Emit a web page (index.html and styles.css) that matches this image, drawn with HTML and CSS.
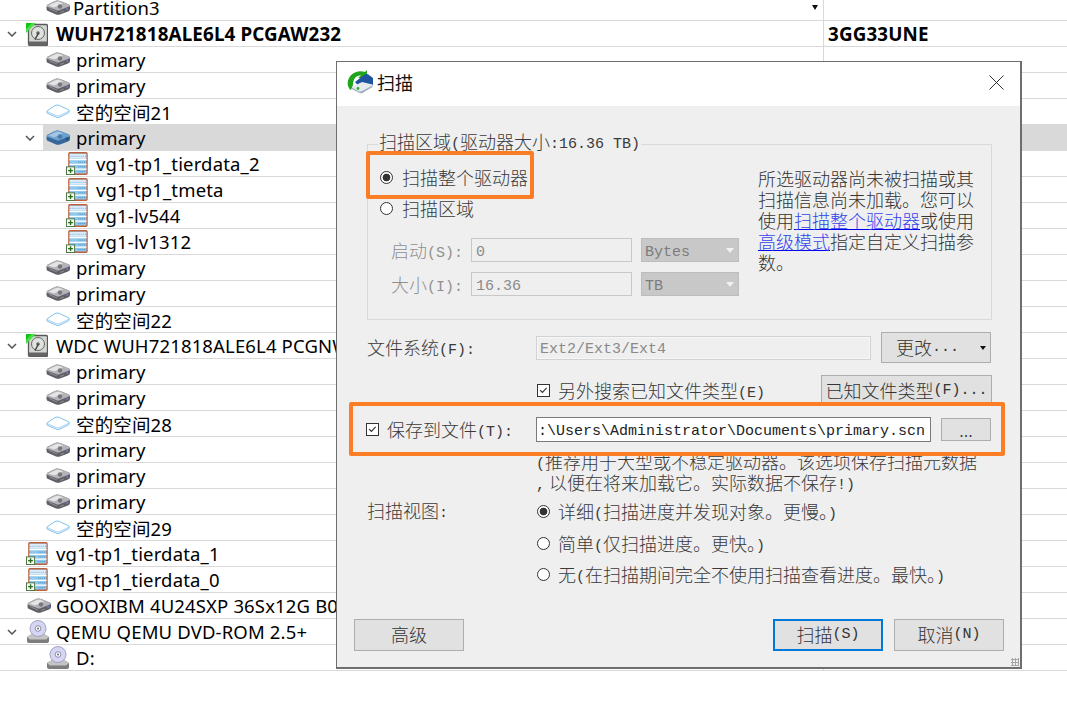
FILE: index.html
```html
<!DOCTYPE html>
<html lang="zh">
<head>
<meta charset="utf-8">
<title>扫描</title>
<link rel="stylesheet" href="styles.css">
</head>
<body>
<svg class="defs" width="0" height="0">
  <defs>
    <symbol id="chev" viewBox="0 0 10 6"><path d="M1 1l4 4 4-4" fill="none" stroke="#555" stroke-width="1.5"/></symbol>
    <symbol id="part" viewBox="0 0 24 15">
      <path d="M1 5L9 1Q11 0 14 1L23 4.500Q24 5.500 24 7.500V9Q24 10.500 22 11.500L14 14.500Q12 15.200 10 14.500L1 10.500Q0 8 1 5Z" fill="#5f5f66"/>
      <path d="M1 5L9 1Q11 0 14 1L23 4.500Q24 5.500 23 6.500L14 10Q12 11 10 10L1 6.800Q.5 6 1 5Z" fill="#b4b4b8"/>
      <path d="M2.500 5.500L10 2Q12 1.500 13.500 2L17 3.500L8 7.500Z" fill="#e4e4e4"/>
      <circle cx="14" cy="6.500" r="2.200" fill="#77777e"/>
      <circle cx="21" cy="8.800" r="1.400" fill="#7474a4"/>
      <path d="M3 8.500L11 12M14 12.500L18 11" stroke="#8d8d92" fill="none"/>
    </symbol>
    <symbol id="part-sel" viewBox="0 0 24 15">
      <path d="M1 5L9 1Q11 0 14 1L23 4.500Q24 5.500 24 7.500V9Q24 10.500 22 11.500L14 14.500Q12 15.200 10 14.500L1 10.500Q0 8 1 5Z" fill="#35679b"/>
      <path d="M1 5L9 1Q11 0 14 1L23 4.500Q24 5.500 23 6.500L14 10Q12 11 10 10L1 6.800Q.5 6 1 5Z" fill="#6f9fcc"/>
      <path d="M2.500 5.500L10 2Q12 1.500 13.500 2L17 3.500L8 7.500Z" fill="#a3c5e6"/>
      <circle cx="14" cy="6.500" r="2.200" fill="#477aab"/>
      <circle cx="21" cy="8.800" r="1.400" fill="#234c7f"/>
    </symbol>
    <symbol id="empty" viewBox="0 0 24 15">
      <path d="M1 7L9 1.500Q11 .5 13.500 1.500L23 6Q23.500 7 23 8.500L14 13Q12 14 10 13L1 9Q.5 8 1 7Z" fill="#fff" stroke="#7fc0ee" stroke-width="1"/>
      <path d="M1 7.500L10 11.500Q12 12.300 14 11.500L23 7" fill="none" stroke="#a9d7f5" stroke-width="1"/>
    </symbol>
    <symbol id="disk-ok" viewBox="0 0 22 23">
      <rect x="2.500" y="1.500" width="19" height="21" rx="1.500" fill="#d3d7d2" stroke="#585858" stroke-width="1.300"/>
      <rect x="2.500" y="18.500" width="19" height="4" fill="#656565"/>
      <circle cx="12" cy="10" r="6.500" fill="#dfe2de" stroke="#666"/>
      <circle cx="12" cy="10" r="1.800" fill="#666"/>
      <path d="M9 16.500L12.500 10" stroke="#444" stroke-width="1.500"/>
      <path d="M0 0H10L0 10Z" fill="#4ade4a"/>
      <path d="M0 0H6L0 6Z" fill="#12c312"/>
    </symbol>
    <symbol id="lv" viewBox="0 0 23 24">
      <rect x="3" y=".8" width="19" height="22.400" rx="1" fill="#8fc8ec" stroke="#c0603a" stroke-width="1.400"/>
      <rect x="3.800" y="2" width="17.400" height="5" fill="#dcedfa"/>
      <path d="M4 4.500h17" stroke="#7fa9cf" stroke-dasharray="1 1"/>
      <path d="M3.500 8h18M3.500 13h18M3.500 18h18" stroke="#fff" stroke-width="1.300"/>
      <path d="M13 10.500h7M13 15.500h7M13 20.500h7" stroke="#3f85bb" stroke-dasharray="1 1"/>
      <rect x=".5" y="15.500" width="8.500" height="8" fill="#f4fbf0" stroke="#4d7243"/>
      <path d="M4.750 17v5M2.200 19.500h5" stroke="#2a6a1c" stroke-width="1.400"/>
    </symbol>
    <symbol id="cd" viewBox="0 0 24 24">
      <path d="M1 17L6 14H18L23 17V21Q23 23 20 23H4Q1 23 1 21Z" fill="#7d7d7d"/>
      <path d="M1 17L6 14H18L23 17L20 19.500H4Z" fill="#c4c4c4"/>
      <circle cx="12" cy="8.500" r="8" fill="#d6d6f2" stroke="#a0a0c6"/>
      <circle cx="12" cy="8.500" r="2.800" fill="#fff" stroke="#8c8cb0"/>
      <circle cx="12" cy="8.500" r="1" fill="#666"/>
    </symbol>
    <symbol id="app" viewBox="0 0 26 24">
      <path d="M1 16C-1 7 8 -1 18 2L20 0V8H11L14 5.500C9 5 6 9 6 15L4 20Q2 19 1 16Z" fill="#1fa51c"/>
      <path d="M8 12L17 5Q20 3 22 5L26 8V15L14 19Z" fill="#1f559f"/>
      <path d="M5 17L15 12L25.500 14.500V17L15 23Q13 24 11 23L5 19.500Z" fill="#e6e9ef"/>
      <path d="M5 19L13 23Q15 24 17 22L25.500 17V15.500L15 21Q13 22 11 21L5 17.500Z" fill="#a4adbb"/>
      <circle cx="11" cy="18.500" r="1.400" fill="#1fb31f"/>
    </symbol>
    <symbol id="check" viewBox="0 0 13 13"><path d="M2.500 6l2.700 2.800 5-5.300" fill="none" stroke="#333" stroke-width="1.400"/></symbol>
  </defs>
</svg>

<main class="tree">
  <div class="row lvl1"><div class="name"><span class="nochev"></span><span class="body"><svg class="ico"><use href="#part"/></svg><span class="partition">Partition3</span><i class="sort"></i></span></div><div class="cell"></div></div>
  <div class="row lvl0 strong"><div class="name"><svg class="chev"><use href="#chev"/></svg><span class="body"><svg class="ico big"><use href="#disk-ok"/></svg><span>WUH721818ALE6L4 PCGAW232</span></span></div><div class="cell">3GG33UNE</div></div>
  <div class="row lvl1"><div class="name"><span class="nochev"></span><span class="body"><svg class="ico"><use href="#part"/></svg><span>primary</span></span></div><div class="cell"></div></div>
  <div class="row lvl1"><div class="name"><span class="nochev"></span><span class="body"><svg class="ico"><use href="#part"/></svg><span>primary</span></span></div><div class="cell"></div></div>
  <div class="row lvl1"><div class="name"><span class="nochev"></span><span class="body"><svg class="ico"><use href="#empty"/></svg><span>空的空间21</span></span></div><div class="cell"></div></div>
  <div class="row lvl1 sel"><div class="name"><svg class="chev"><use href="#chev"/></svg><span class="body"><svg class="ico"><use href="#part-sel"/></svg><span>primary</span></span></div><div class="cell"></div></div>
  <div class="row lvl2"><div class="name"><span class="nochev"></span><span class="body"><svg class="ico big"><use href="#lv"/></svg><span>vg1-tp1_tierdata_2</span></span></div><div class="cell"></div></div>
  <div class="row lvl2"><div class="name"><span class="nochev"></span><span class="body"><svg class="ico big"><use href="#lv"/></svg><span>vg1-tp1_tmeta</span></span></div><div class="cell"></div></div>
  <div class="row lvl2"><div class="name"><span class="nochev"></span><span class="body"><svg class="ico big"><use href="#lv"/></svg><span>vg1-lv544</span></span></div><div class="cell"></div></div>
  <div class="row lvl2"><div class="name"><span class="nochev"></span><span class="body"><svg class="ico big"><use href="#lv"/></svg><span>vg1-lv1312</span></span></div><div class="cell"></div></div>
  <div class="row lvl1"><div class="name"><span class="nochev"></span><span class="body"><svg class="ico"><use href="#part"/></svg><span>primary</span></span></div><div class="cell"></div></div>
  <div class="row lvl1"><div class="name"><span class="nochev"></span><span class="body"><svg class="ico"><use href="#part"/></svg><span>primary</span></span></div><div class="cell"></div></div>
  <div class="row lvl1"><div class="name"><span class="nochev"></span><span class="body"><svg class="ico"><use href="#empty"/></svg><span>空的空间22</span></span></div><div class="cell"></div></div>
  <div class="row lvl0"><div class="name"><svg class="chev"><use href="#chev"/></svg><span class="body"><svg class="ico big"><use href="#disk-ok"/></svg><span>WDC WUH721818ALE6L4 PCGNW</span></span></div><div class="cell"></div></div>
  <div class="row lvl1"><div class="name"><span class="nochev"></span><span class="body"><svg class="ico"><use href="#part"/></svg><span>primary</span></span></div><div class="cell"></div></div>
  <div class="row lvl1"><div class="name"><span class="nochev"></span><span class="body"><svg class="ico"><use href="#part"/></svg><span>primary</span></span></div><div class="cell"></div></div>
  <div class="row lvl1"><div class="name"><span class="nochev"></span><span class="body"><svg class="ico"><use href="#empty"/></svg><span>空的空间28</span></span></div><div class="cell"></div></div>
  <div class="row lvl1"><div class="name"><span class="nochev"></span><span class="body"><svg class="ico"><use href="#part"/></svg><span>primary</span></span></div><div class="cell"></div></div>
  <div class="row lvl1"><div class="name"><span class="nochev"></span><span class="body"><svg class="ico"><use href="#part"/></svg><span>primary</span></span></div><div class="cell"></div></div>
  <div class="row lvl1"><div class="name"><span class="nochev"></span><span class="body"><svg class="ico"><use href="#part"/></svg><span>primary</span></span></div><div class="cell"></div></div>
  <div class="row lvl1"><div class="name"><span class="nochev"></span><span class="body"><svg class="ico"><use href="#empty"/></svg><span>空的空间29</span></span></div><div class="cell"></div></div>
  <div class="row lvl0"><div class="name"><span class="nochev"></span><span class="body"><svg class="ico big"><use href="#lv"/></svg><span>vg1-tp1_tierdata_1</span></span></div><div class="cell"></div></div>
  <div class="row lvl0"><div class="name"><span class="nochev"></span><span class="body"><svg class="ico big"><use href="#lv"/></svg><span>vg1-tp1_tierdata_0</span></span></div><div class="cell"></div></div>
  <div class="row lvl0"><div class="name"><span class="nochev"></span><span class="body"><svg class="ico"><use href="#part"/></svg><span>GOOXIBM 4U24SXP 36Sx12G B0</span></span></div><div class="cell"></div></div>
  <div class="row lvl0"><div class="name"><svg class="chev"><use href="#chev"/></svg><span class="body"><svg class="ico cd"><use href="#cd"/></svg><span>QEMU QEMU DVD-ROM 2.5+</span></span></div><div class="cell"></div></div>
  <div class="row lvl1"><div class="name"><span class="nochev"></span><span class="body"><svg class="ico cd"><use href="#cd"/></svg><span>D:</span></span></div><div class="cell"></div></div>
</main>

<section class="dialog">
  <header class="titlebar">
    <svg class="appicon"><use href="#app"/></svg>
    <span class="title">扫描</span>
    <svg class="close" viewBox="0 0 16 16"><path d="M.5.500l15 15M15.500.500l-15 15" stroke="#222" stroke-width="1" fill="none"/></svg>
  </header>
  <div class="content">
    <div class="group">
      <div class="legend">扫描区域<span class="m">(</span>驱动器大小<span class="m">:16.36 TB)</span></div>
      <div class="group-grid">
        <div class="group-left">
          <div class="opt"><span class="radio on"></span><span>扫描整个驱动器</span></div>
          <div class="opt"><span class="radio"></span><span>扫描区域</span></div>
          <div class="range">
            <span class="range-label">启动<span class="m">(S):</span></span>
            <span class="field-dis m">0</span>
            <span class="combo m">Bytes</span>
          </div>
          <div class="range">
            <span class="range-label">大小<span class="m">(I):</span></span>
            <span class="field-dis m">16.36</span>
            <span class="combo m">TB</span>
          </div>
        </div>
        <p class="hint">所选驱动器尚未被扫描或其<br>扫描信息尚未加载。您可以<br>使用<a href="#" class="link">扫描整个驱动器</a>或使用<br><a href="#" class="link">高级模式</a>指定自定义扫描参<br>数。</p>
      </div>
    </div>

    <div class="line fs-line">
      <span class="lab">文件系统<span class="m">(F):</span></span>
      <span class="fs-field m">Ext2/Ext3/Ext4</span>
      <button class="btn change">更改<span class="m">...</span><i class="tri"></i></button>
    </div>

    <div class="line known-line">
      <span class="lab"></span>
      <span class="chk-wrap"><svg class="checkbox"><use href="#check"/></svg><span>另外搜索已知文件类型<span class="m">(E)</span></span></span>
      <button class="btn known">已知文件类型<span class="m">(F)...</span></button>
    </div>

    <div class="line save-line">
      <span class="lab save-lab"><svg class="checkbox"><use href="#check"/></svg><span>保存到文件<span class="m">(T):</span></span></span>
      <span class="path m">:\Users\Administrator\Documents\primary.scn</span>
      <button class="btn dots m">...</button>
    </div>

    <p class="note"><span class="m">(</span>推荐用于大型或不稳定驱动器。该选项保存扫描元数据<br><span class="m">,</span> 以便在将来加载它。实际数据不保存<span class="m">!)</span></p>

    <div class="view">
      <span class="lab view-lab">扫描视图<span class="m">:</span></span>
      <div class="view-opts">
        <div class="vopt"><span class="radio on"></span><span>详细<span class="m">(</span>扫描进度并发现对象。更慢。<span class="m">)</span></span></div>
        <div class="vopt"><span class="radio"></span><span>简单<span class="m">(</span>仅扫描进度。更快。<span class="m">)</span></span></div>
        <div class="vopt"><span class="radio"></span><span>无<span class="m">(</span>在扫描期间完全不使用扫描查看进度。最快。<span class="m">)</span></span></div>
      </div>
    </div>

    <footer class="actions">
      <button class="btn act">高级</button>
      <span class="spacer"></span>
      <button class="btn act primary">扫描<span class="m">(S)</span></button>
      <button class="btn act">取消<span class="m">(N)</span></button>
    </footer>
  </div>
  <i class="grip"></i>
  <i class="mark mark-a"></i>
  <i class="mark mark-b"></i>
</section>
</body>
</html>
```

FILE: styles.css
```css
* { box-sizing: border-box; }
html, body { margin: 0; padding: 0; height: 100%; overflow: hidden; background: #fff; }
body { font-family: "Noto Sans", "Noto Sans CJK SC", sans-serif; color: #000; }
.defs { position: absolute; }

/* tree table */
.tree { margin-top: -5px; font-size: 18.500px; letter-spacing: .15px; }
.row { display: grid; grid-template-columns: 824px 1fr; height: 26px; border-bottom: 1px solid #d9d9d9; white-space: nowrap; }
.name { display: flex; align-items: center; border-right: 1px solid #d9d9d9; overflow: hidden; min-width: 0; }
.cell { display: flex; align-items: center; padding-left: 4px; }
.strong { font-weight: 700; font-size: 18.800px; }
.chev { width: 10px; height: 6px; margin-right: 8px; flex: none; }
.nochev { width: 18px; flex: none; }
.lvl0 .name { padding-left: 7px; }
.lvl1 .name { padding-left: 25px; }
.lvl2 .name { padding-left: 45px; }
.body { display: flex; align-items: center; flex: 1; height: 100%; min-width: 0; padding-left: 3px; }
.lvl0 .body { padding-left: 1px; }
.lvl2 .body { padding-left: 3px; }
.ico { width: 24px; height: 15px; margin-right: 6px; flex: none; }
.ico.big { width: 22px; height: 23px; margin-right: 8px; }
.ico.cd { width: 24px; height: 24px; margin-right: 6px; }
.lvl0 .ico:not(.big):not(.cd) { margin-left: 1px; margin-right: 5px; }
.partition { margin-left: -3px; }
.sel .body, .sel .cell { background: #d9d9d9; }
.sort { margin-left: auto; margin-right: 5px; width: 0; height: 0; border: 3.500px solid transparent; border-top: 5px solid #111; border-bottom: 0; }

/* dialog */
.dialog { position: absolute; left: 336px; top: 61px; width: 686px; height: 608px; background: #efefef; border: 1px solid #6e6e6e; border-bottom-width: 2px; border-right-width: 2px; }
.titlebar { display: flex; align-items: center; height: 44px; background: #fff; padding: 0 16px 4px 10px; }
.appicon { width: 26px; height: 24px; margin-right: 4px; flex: none; }
.title { font-family: "Noto Sans CJK SC", sans-serif; font-size: 18px; color: #111; }
.close { width: 15px; height: 15px; margin-left: auto; }
.content { padding: 38px 30px 0 30px; font-family: "Noto Sans CJK SC", sans-serif; font-size: 18px; font-weight: 300; color: #3a3a3a; white-space: nowrap; line-height: 21px; }
.m { font-family: "Liberation Mono", monospace; font-size: 15px; font-weight: 400; line-height: 1; vertical-align: 1.500px; }

.group { height: 176px; width: 625px; border: 1px solid #d9d9d9; }
.legend { width: max-content; margin: -14px 0 0 10px; padding: 0 1px; background: #efefef; height: 21px; }
.group-grid { display: grid; grid-template-columns: 390px 1fr; }
.group-left { padding: 10px 0 0 12px; }
.opt { display: flex; align-items: center; height: 31px; gap: 9px; }
.radio { width: 13px; height: 13px; border-radius: 50%; border: 1px solid #333; background: #fff; flex: none; }
.radio.on { background: radial-gradient(circle, #333 0 3.500px, #fff 4.200px); }
.range { display: flex; align-items: center; height: 24px; margin-left: 11px; margin-top: 10px; color: #8f8f8f; }
.opt + .range { margin-top: 14px; }
.range-label { width: 80px; flex: none; }
.field-dis { width: 161px; height: 24px; line-height: 20px; padding-top: 4px; border: 1px solid #c8c8c8; padding-left: 4px; color: #8a8a8a; margin-right: 9px; flex: none; }
.combo { position: relative; width: 98px; height: 24px; line-height: 20px; padding-top: 4px; background: #c8c8c8; border: 1px solid #bdbdbd; padding-left: 3px; color: #7c7c7c; flex: none; }
.combo::after { content: ""; position: absolute; right: 4px; top: 9px; border: 4px solid transparent; border-top: 5px solid #f2f2f2; border-bottom: 0; }
.hint { margin: 16px 0 0 0; color: #333; }
.link { color: #3344ee; text-decoration: underline; text-decoration-color: #0000ee; }

.line { display: flex; align-items: center; }
.lab { width: 169px; flex: none; }
.fs-line { margin-top: 12px; height: 31px; width: 625px; }
.fs-field { width: 335px; height: 24px; line-height: 20px; padding-top: 3px; border: 1px solid #d2d2d2; box-shadow: inset 0 0 0 1px #f7f7f7; padding-left: 3px; color: #8a8a8a; }
.btn { font: inherit; color: #333; background: #e1e1e1; border: 1px solid #adadad; padding: 0; display: inline-flex; align-items: center; justify-content: center; }
.change { position: relative; margin-left: 10px; width: 110px; height: 31px; padding-right: 17px; }
.tri { position: absolute; right: 4px; top: 13px; border: 3.500px solid transparent; border-top: 4px solid #111; border-bottom: 0; }
.known-line { margin-top: 12px; height: 30px; width: 625px; justify-content: flex-start; }
.chk-wrap { display: flex; align-items: center; gap: 8px; margin-left: 1px; }
.checkbox { width: 13px; height: 13px; border: 1px solid #333; background: #fff; flex: none; }
.known { margin-left: auto; width: 171px; height: 30px; align-self: flex-start; }
.save-line { margin-top: 12px; height: 25px; width: 625px; }
.save-lab { display: flex; align-items: center; gap: 8px; margin-left: -1px; width: 170px; }
.path { width: 395px; height: 25px; line-height: 20px; padding-top: 4px; background: #fff; border: 1px solid #7a7a7a; padding-left: 1px; color: #222; }
.dots { margin-left: 10px; width: 50px; height: 23px; }
.note { margin: 9px 0 0 169px; }
.view { display: flex; margin-top: 3px; }
.view-lab { padding-top: 4px; }
.view-opts { display: flex; flex-direction: column; }
.vopt { display: flex; align-items: center; gap: 8px; height: 31.500px; margin-left: 1px; }
.actions { display: flex; margin: 28px -14px 0 -13px; gap: 11px; }
.spacer { flex: 1; }
.act { width: 110px; height: 32px; }
.primary { border: 2px solid #0078d7; }

.grip { position: absolute; right: 1px; bottom: 1px; width: 8px; height: 8px; background: radial-gradient(circle, #a6a6a6 1px, transparent 1.200px) 0 0 / 3px 3px; }
.mark { position: absolute; border: 4px solid #fb7e26; border-radius: 2px; pointer-events: none; }
.mark-a { left: 29px; top: 89px; width: 168px; height: 48px; }
.mark-b { left: 12px; top: 340px; width: 656px; height: 54px; }
```
